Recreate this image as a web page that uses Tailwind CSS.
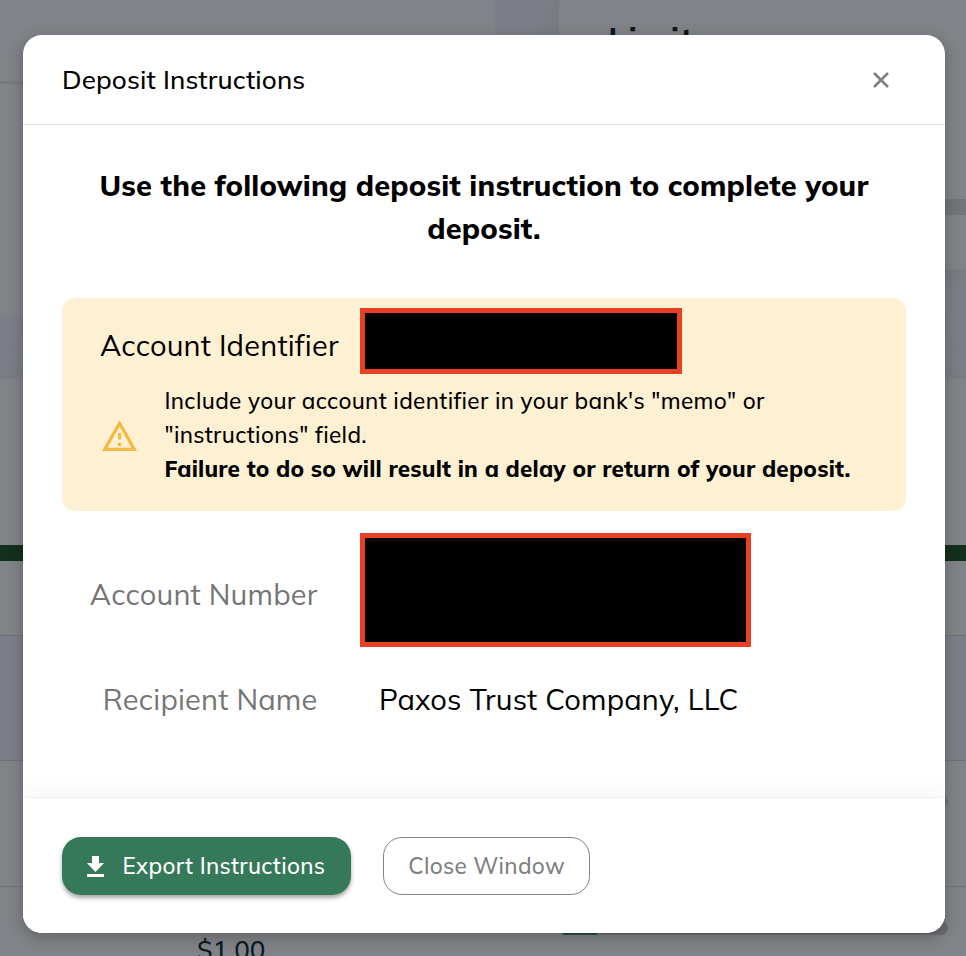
<!DOCTYPE html>
<html lang="en">
<head>
  <meta charset="UTF-8" />
  <meta name="viewport" content="width=device-width, initial-scale=1.0" />
  <title>Deposit Instructions</title>
  <script src="https://cdn.jsdelivr.net/npm/@tailwindcss/browser@4"></script>
  <style>
    body { font-family: Mulish, Lato, 'Open Sans', sans-serif; }
  </style>
</head>
<body class="relative w-[966px] h-[956px] overflow-hidden bg-[#7c7f88] text-black">

  <!-- Dimmed page -->
  <div class="h-full flex flex-col">
    <div class="h-[379px] shrink-0 flex justify-between bg-[#7c7f88]">
      <div class="w-[495px] h-[315px] bg-[#808387]">
        <div class="h-[84px] border-b-3 border-[#797b7f]"></div>
      </div>
      <div class="w-[407px] h-[269px] rounded-tl bg-[#808387] shadow-[0_2px_28px_2px_#737a79]">
        <div class="h-[199px] pl-[49px] pt-[22px] text-[34px] leading-[38px] font-bold tracking-[1.3px] text-[#0d191f]">Limits</div>
        <div class="h-4 bg-[#727579]"></div>
      </div>
    </div>
    <div class="h-[166px] shrink-0 bg-[#808387] shadow-[0_-2px_24px_#787d7e]"></div>
    <div class="h-4 shrink-0 bg-[#132f1d]"></div>
    <div class="h-[75px] shrink-0 bg-[#808387] border-b border-[#717378]"></div>
    <div class="h-[125px] shrink-0 bg-[#7c7f88] border-b border-[#717378]"></div>
    <div class="h-[126px] shrink-0 bg-[#808387] border-b border-[#717378] pt-[34px] pl-[559px]">
      <div class="w-[389px] h-3.5 rounded-full bg-[#717378]"></div>
    </div>
    <div class="flex-1 flex bg-[#808387] border-b border-[#66686b]">
      <div class="w-[559px] pl-[197px] pt-[47px] text-[26px] leading-[32px] font-medium text-[#0d191f]">$1.00</div>
      <div class="pt-[34px]">
        <div class="w-[389px] h-3.5 rounded-full overflow-hidden bg-[#6b6d71]">
          <div class="w-[38px] h-full bg-[#23503f]"></div>
        </div>
        <div class="mt-[15px] text-[22px] leading-[28px] text-[#0d191f]">13.44%</div>
      </div>
    </div>
  </div>

  <!-- Dialog -->
  <div class="absolute left-[23px] top-[35px] w-[922px] h-[898px] flex flex-col rounded-[19px] bg-white overflow-hidden shadow-[0_4px_16px_rgba(0,0,0,0.25)]">
    <div class="h-[90px] shrink-0 flex items-center justify-between pl-[39px] pr-14 border-b border-[#e3e3e3]">
      <h1 class="text-[26px] font-medium tracking-[0.15px] whitespace-nowrap">Deposit Instructions</h1>
      <svg class="size-4" viewBox="0 0 16 16" fill="none" stroke="#808080" stroke-width="2.6"><path d="M1 1l14 14M15 1L1 15"/></svg>
    </div>

    <div class="flex-1 px-[39px] pt-[39px]">
      <h2 class="text-center text-[29px] leading-[43px] font-extrabold tracking-[0.16px] whitespace-nowrap">Use the following deposit instruction to complete your<br />deposit.</h2>

      <div class="mt-12 h-[213px] rounded-[13px] bg-[#fef0d2] pt-2.5">
        <div class="flex items-center">
          <div class="w-[298px] pl-[38px] pt-2.5 text-[29px] tracking-[0.2px] whitespace-nowrap">Account Identifier</div>
          <div class="w-[322px] h-[66px] border-5 border-[#e83f25] bg-black"></div>
        </div>
        <div class="flex items-center mt-2.5 pl-10">
          <svg class="w-[35px] h-[31px] shrink-0" viewBox="1 2 22 19" preserveAspectRatio="none" fill="#f4b942"><path d="M12 5.99L19.53 19H4.47L12 5.99M12 2L1 21h22L12 2zm1 14h-2v2h2v-2zm0-6h-2v4h2v-4z"/></svg>
          <div class="ml-[27.5px] text-[22.5px] leading-[34px] font-medium tracking-[0.34px] whitespace-nowrap">
            <p>Include your account identifier in your bank's "memo" or</p>
            <p>"instructions" field.</p>
            <p class="font-extrabold tracking-[0.2px]">Failure to do so will result in a delay or return of your deposit.</p>
          </div>
        </div>
      </div>

      <div class="mt-[22px] flex items-center">
        <div class="w-[298px] pr-[42.5px] pt-2.5 text-right text-[29px] tracking-[0.2px] text-[#757575] whitespace-nowrap">Account Number</div>
        <div class="w-[391px] h-[114px] border-5 border-[#e83f25] bg-black"></div>
      </div>
      <div class="mt-[31px] flex items-center text-[29px] leading-[42px] whitespace-nowrap">
        <div class="w-[298px] pr-[42.5px] text-right tracking-[0.2px] text-[#757575]">Recipient Name</div>
        <div class="pl-[19px] tracking-[0.2px]">Paxos Trust Company, LLC</div>
      </div>
    </div>

    <div class="h-[134px] shrink-0 flex items-center gap-8 px-[39px] bg-white shadow-[0_0_26px_rgba(0,0,0,0.08)]">
      <button class="w-[289px] h-[58px] flex items-center pl-[25px] rounded-[19px] bg-[#36795a] text-white text-[22.5px] font-medium tracking-[0.33px] whitespace-nowrap shadow-[0_3px_4px_rgba(0,0,0,0.35)]">
        <svg class="w-[17px] h-[21px] mr-[18.5px] shrink-0" viewBox="0 0 17 21" fill="currentColor"><path d="M5 0h7v7h5l-8.5 9L0 7h5zM0 18h17v3H0z"/></svg>
        Export Instructions
      </button>
      <button class="w-[207px] h-[58px] rounded-[19px] border border-[#858585] text-[#808080] text-[22.5px] font-medium tracking-[0.3px] whitespace-nowrap">Close Window</button>
    </div>
  </div>
</body>
</html>
